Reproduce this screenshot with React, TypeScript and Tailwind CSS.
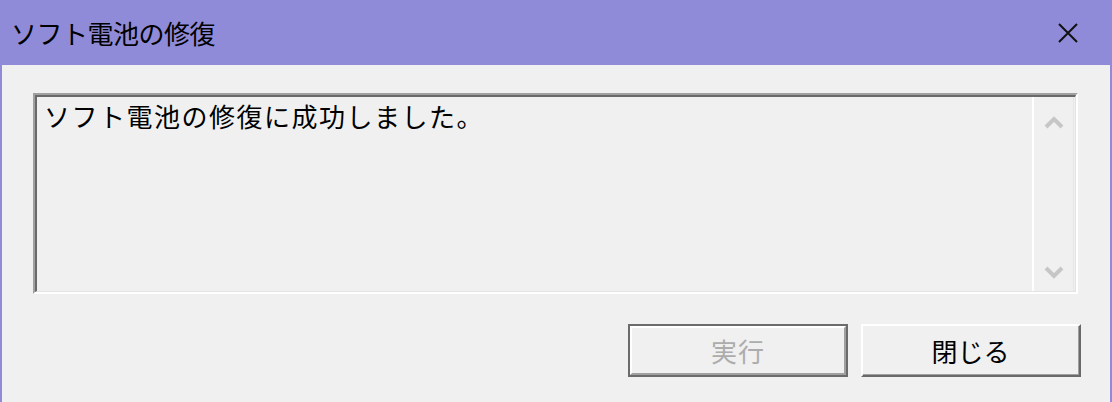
const jp = { fontFamily: '"Noto Sans CJK JP", "Liberation Sans", sans-serif' };

function Chevron({ dir }: { dir: 'up' | 'down' }) {
  return (
    <svg width="22" height="14" viewBox="0 0 22 14" className="block">
      <path
        d={dir === 'up' ? 'M3 12 L11 4 L19 12' : 'M3 2 L11 10 L19 2'}
        fill="none"
        stroke="#c6c6c6"
        strokeWidth="4"
      />
    </svg>
  );
}

export default function App() {
  return (
    <div className="w-[1112px] h-[402px] flex flex-col bg-[#f0f0f0] overflow-hidden" style={jp}>
      {/* タイトルバー */}
      <div className="h-[65px] shrink-0 bg-[#8f8bd9] flex items-center justify-between pl-[11px] pr-[33px]">
        <span className="text-[26px] leading-none text-black tracking-[-0.5px]">ソフト電池の修復</span>
        <svg width="22" height="22" viewBox="0 0 22 22">
          <path d="M2 2 L20 20 M20 2 L2 20" stroke="#111" strokeWidth="2" />
        </svg>
      </div>

      {/* 本体 */}
      <div className="flex-1 flex flex-col border-x-2 border-[#8f8bd9] pl-[31px] pr-[29px] pt-[28px]">
        <div className="w-[1045px] h-[201px] border-2 border-t-[#a0a0a0] border-l-[#a0a0a0] border-b-white border-r-white">
          <div className="h-full flex border-t-2 border-l-2 border-t-[#696969] border-l-[#696969] border-b border-r border-b-[#e3e3e3] border-r-[#e3e3e3]">
            <div className="flex-1 pl-[7px] pt-[4px] text-[26px] leading-[30px] text-black tracking-[1.5px]">
              ソフト電池の修復に成功しました。
            </div>
            <div className="w-[42px] mr-[1px] border-l-2 border-r border-l-white border-r-[#e6e6e6] flex flex-col items-center justify-between pt-[18px] pb-[11px]">
              <Chevron dir="up" />
              <Chevron dir="down" />
            </div>
          </div>
        </div>

        <div className="flex justify-end gap-[13px] mt-[30px]">
          {/* 実行 (無効・既定ボタン) */}
          <div className="w-[220px] h-[53px] border-2 border-[#6b6b6b]">
            <div className="h-full flex items-center justify-center border-2 border-t-white border-l-white border-b-[#a0a0a0] border-r-[#a0a0a0] text-[26px] text-[#acacac] tracking-[1px]">
              実行
            </div>
          </div>
          {/* 閉じる */}
          <div className="w-[220px] h-[53px] border-2 border-t-white border-l-white border-b-[#696969] border-r-[#696969]">
            <div className="h-full flex items-center justify-center border-b border-r border-b-[#a0a0a0] border-r-[#a0a0a0] text-[26px] text-black">
              閉じる
            </div>
          </div>
        </div>
      </div>
    </div>
  );
}
